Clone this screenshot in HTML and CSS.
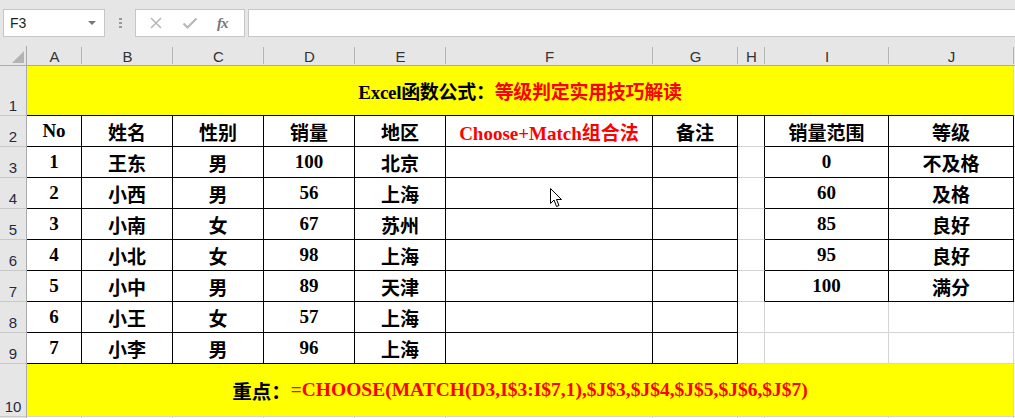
FILE: index.html
```html
<!DOCTYPE html>
<html>
<head>
    <title>等级判定</title>
    <link rel="stylesheet" href="styles.css">
</head>
<body>
    <div class="toolbar">
        <div class="namebox">F3<span class="drop"></span></div>
        <div class="grip"></div>
        <div class="fxbox">
            <svg class="btn" width="14" height="14" viewBox="0 0 14 14"><path d="M2 2 L12 12 M12 2 L2 12" stroke="#b8b8b8" stroke-width="1.6"/></svg>
            <svg class="btn" width="16" height="14" viewBox="0 0 16 14"><path d="M1.5 7.5 L5.5 11.5 L14.5 2.5" stroke="#b8b8b8" stroke-width="2.2" fill="none"/></svg>
            <span class="fx">fx</span>
        </div>
        <div class="formula"></div>
    </div>

    <div class="sheet">
        <!-- column headers -->
        <div class="corner"><span class="tri"></span></div>
        <div class="ch">A</div><div class="ch">B</div><div class="ch">C</div><div class="ch">D</div><div class="ch">E</div>
        <div class="ch">F</div><div class="ch">G</div><div class="ch">H</div><div class="ch">I</div><div class="ch">J</div><div class="ch last"></div>

        <!-- 1 -->
        <div class="rh">1</div>
        <div class="band bb">Excel函数公式：<span class="red">等级判定实用技巧解读</span></div>
        <div class="c"></div>

        <!-- 2 -->
        <div class="rh">2</div>
        <div class="c k">No</div><div class="c k">姓名</div><div class="c k">性别</div><div class="c k">销量</div><div class="c k">地区</div>
        <div class="c k red">Choose+Match组合法</div><div class="c k">备注</div>
        <div class="c kr"></div><div class="c k">销量范围</div><div class="c k">等级</div><div class="c"></div>

        <!-- 3 -->
        <div class="rh">3</div>
        <div class="c k">1</div><div class="c k">王东</div><div class="c k">男</div><div class="c k">100</div><div class="c k">北京</div>
        <div class="c k"></div><div class="c k"></div>
        <div class="c kr"></div><div class="c k">0</div><div class="c k">不及格</div><div class="c"></div>

        <!-- 4 -->
        <div class="rh">4</div>
        <div class="c k">2</div><div class="c k">小西</div><div class="c k">男</div><div class="c k">56</div><div class="c k">上海</div>
        <div class="c k cursor-cell">
            <svg class="cursor" width="13" height="20" viewBox="0 0 13 20"><path d="M0.5 0.5 L0.5 15.5 L4 12 L6.5 18.5 L9 17.5 L6.5 11.5 L11.5 11.5 Z" fill="#fff" stroke="#000" stroke-width="1"/></svg>
        </div>
        <div class="c k"></div>
        <div class="c kr"></div><div class="c k">60</div><div class="c k">及格</div><div class="c"></div>

        <!-- 5 -->
        <div class="rh">5</div>
        <div class="c k">3</div><div class="c k">小南</div><div class="c k">女</div><div class="c k">67</div><div class="c k">苏州</div>
        <div class="c k"></div><div class="c k"></div>
        <div class="c kr"></div><div class="c k">85</div><div class="c k">良好</div><div class="c"></div>

        <!-- 6 -->
        <div class="rh">6</div>
        <div class="c k">4</div><div class="c k">小北</div><div class="c k">女</div><div class="c k">98</div><div class="c k">上海</div>
        <div class="c k"></div><div class="c k"></div>
        <div class="c kr"></div><div class="c k">95</div><div class="c k">良好</div><div class="c"></div>

        <!-- 7 -->
        <div class="rh">7</div>
        <div class="c k">5</div><div class="c k">小中</div><div class="c k">男</div><div class="c k">89</div><div class="c k">天津</div>
        <div class="c k"></div><div class="c k"></div>
        <div class="c kr"></div><div class="c k">100</div><div class="c k">满分</div><div class="c"></div>

        <!-- 8 -->
        <div class="rh">8</div>
        <div class="c k">6</div><div class="c k">小王</div><div class="c k">女</div><div class="c k">57</div><div class="c k">上海</div>
        <div class="c k"></div><div class="c k"></div>
        <div class="c"></div><div class="c"></div><div class="c"></div><div class="c"></div>

        <!-- 9 -->
        <div class="rh">9</div>
        <div class="c k">7</div><div class="c k">小李</div><div class="c k">男</div><div class="c k">96</div><div class="c k">上海</div>
        <div class="c k"></div><div class="c k"></div>
        <div class="c"></div><div class="c"></div><div class="c"></div><div class="c"></div>

        <!-- 10 -->
        <div class="rh">10</div>
        <div class="band wide">重点：<span class="red">=CHOOSE(MATCH(D3,I$3:I$7,1),$J$3,$J$4,$J$5,$J$6,$J$7)</span></div>
        <div class="c"></div>

        <!-- 11 -->
        <div class="rh"></div>
        <div class="c"></div><div class="c"></div><div class="c"></div><div class="c"></div><div class="c"></div>
        <div class="c"></div><div class="c"></div><div class="c"></div><div class="c"></div><div class="c"></div><div class="c"></div>
    </div>
</body>
</html>
```

FILE: styles.css
```css
* { box-sizing: border-box; }
body { margin: 0; width: 1015px; height: 418px; overflow: hidden; background: #fff; font-family: "Liberation Sans", Arial, sans-serif; }

/* formula bar */
.toolbar { height: 46px; background: #e6e6e6; display: flex; align-items: flex-start; padding-top: 9px; }
.namebox { margin-left: 3px; width: 102px; height: 28px; background: #fff; border: 1px solid #c6c6c6; font-size: 14px; color: #222; padding: 5px 0 0 6px; position: relative; }
.drop { position: absolute; right: 8px; top: 11px; border-left: 4px solid transparent; border-right: 4px solid transparent; border-top: 4px solid #777; }
.grip { width: 3px; height: 10px; margin: 9px 13px 0 14px; background: repeating-linear-gradient(#999 0 2px, transparent 2px 4px); }
.fxbox { width: 110px; height: 28px; background: #fff; border: 1px solid #c6c6c6; display: flex; align-items: center; gap: 19px; padding-left: 13px; }
.fx { font-family: "Liberation Serif", serif; font-style: italic; font-weight: bold; color: #777; font-size: 15px; letter-spacing: -1px; }
.formula { margin-left: 3px; flex: 1; height: 28px; background: #fff; border: 1px solid #c6c6c6; border-right: none; }

/* sheet grid */
.sheet {
    display: grid;
    grid-template-columns: 27px 55px 91px 91px 91px 91px 207px 85px 27px 124px 125px 10px;
    grid-template-rows: 20px 50px repeat(8, 31px) 53px 10px;
    font-family: "Liberation Serif", "Noto Sans CJK SC", serif;
    font-weight: bold;
    font-size: 19px;
}
.corner { background: #e6e6e6; border-right: 1px solid #ababab; border-bottom: 1px solid #ababab; position: relative; }
.tri { position: absolute; right: 2px; bottom: 2px; border-left: 12px solid transparent; border-bottom: 12px solid #b4b4b4; }
.ch { background: #e6e6e6; border-bottom: 1px solid #ababab; font-family: "Liberation Sans", Arial, sans-serif; font-weight: normal; font-size: 15px; color: #333; display: flex; align-items: center; justify-content: center; padding-top: 1px; position: relative; }
.ch::after { content: ""; position: absolute; right: 0; top: 1px; bottom: 1px; width: 1px; background: #b4b4b4; }
.ch.last::after { display: none; }
.rh { background: #e6e6e6; border-right: 1px solid #ababab; border-bottom: 1px solid #c8c8c8; font-family: "Liberation Sans", Arial, sans-serif; font-weight: normal; font-size: 15px; color: #1f2a44; display: flex; align-items: flex-end; justify-content: center; padding-bottom: 1px; }

.c { border-right: 1px solid #d4d4d4; border-bottom: 1px solid #d4d4d4; display: flex; align-items: center; justify-content: center; color: #000; white-space: nowrap; }
.k { border-right-color: #000; border-bottom-color: #000; }
.kr { border-right-color: #000; }

.band { grid-column: 2 / 12; background: #ff0; border-right: 1px solid #d4d4d4; border-bottom: 1px solid #d4d4d4; display: flex; align-items: center; justify-content: center; white-space: nowrap; color: #000; }
.band.bb { border-bottom-color: #000; letter-spacing: -0.3px; }
.band.wide { font-size: 19.5px; }
.red { color: #f00; }

.cursor-cell { position: relative; }
.cursor { position: absolute; left: 104px; top: 10px; }
```
